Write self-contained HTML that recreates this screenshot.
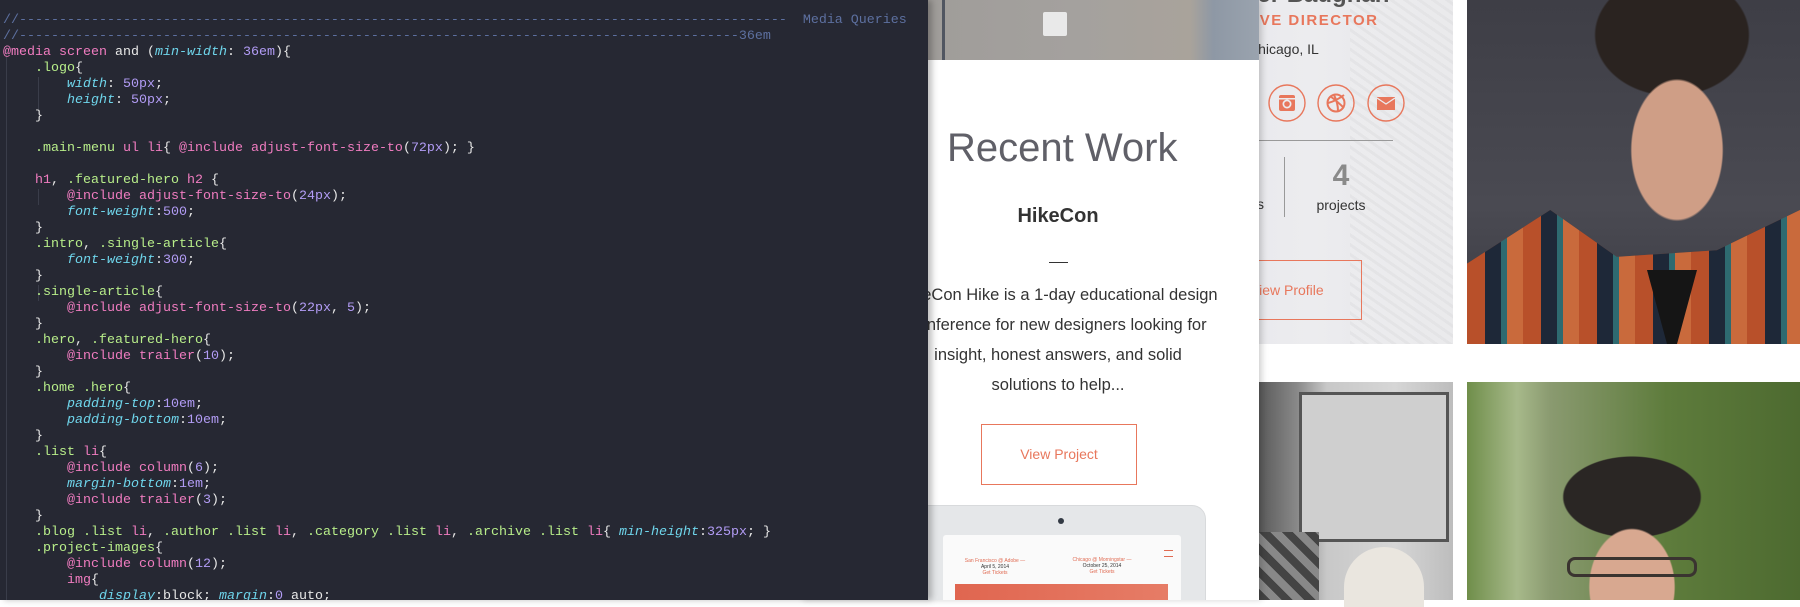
<!DOCTYPE html>
<html><head><meta charset="utf-8"><style>
*{margin:0;padding:0;box-sizing:border-box}
body{width:1800px;height:600px;overflow:hidden;background:#fff;position:relative;font-family:"Liberation Sans",sans-serif}
.abs{position:absolute}
#ed{left:0;top:0;width:928px;height:600px;background:#262833;z-index:5;overflow:hidden;box-shadow:4px 0 6px rgba(0,0,0,.25)}
#code{position:absolute;left:3px;top:13px;font-family:"Liberation Mono",monospace;font-size:13.33px;line-height:16px;color:#e8e8e8;white-space:pre}
.c{color:#5d70a0}.p{color:#f07cc0}.g{color:#b8ee8a}.k{color:#6fd6ec;font-style:italic}.n{color:#b29cf5}.w{color:#eee}
.guide{position:absolute;width:1px;background:#3a3d4a}
#card{left:800px;top:0;width:459px;height:600px;background:#fff;box-shadow:3px 0 6px rgba(0,0,0,.18);z-index:3;overflow:hidden}
#prof{left:1100px;top:0;width:353px;height:344px;background:linear-gradient(90deg,#e4e4e8 0%,#ececef 60%,#e6e6e8 100%);z-index:1;overflow:hidden}
</style></head><body>

<div id="prof" class="abs">
  <div class="abs" style="left:250px;top:0;width:103px;height:344px;background:repeating-linear-gradient(35deg,#e2e2e4 0 3px,#ececee 3px 8px);opacity:.7"></div>
  <div class="abs" style="left:120px;top:-19px;font-size:24px;font-weight:bold;color:#555;white-space:nowrap">Peter Baughan</div>
  <div class="abs" style="left:96px;top:12px;font-size:15px;font-weight:bold;color:#e8775c;letter-spacing:1.5px;white-space:nowrap">CREATIVE DIRECTOR</div>
  <div class="abs" style="left:148px;top:41px;font-size:14px;color:#333;white-space:nowrap">Chicago, IL</div>
  <svg class="abs" style="left:150px;top:84px" width="210" height="40" viewBox="0 0 210 40">
    <g fill="none" stroke="#e8775c" stroke-width="1.4">
      <ellipse cx="37" cy="19" rx="18" ry="18"/><ellipse cx="86" cy="19" rx="18" ry="18"/><ellipse cx="136" cy="19" rx="18" ry="18"/>
    </g>
    <rect x="29" y="11" width="16" height="16" rx="2" fill="#e8775c"/>
    <circle cx="37" cy="20" r="4.5" fill="#ececef"/><circle cx="37" cy="20" r="2.8" fill="#e8775c"/><rect x="29" y="14" width="16" height="1.5" fill="#ececef"/>
    <g fill="none" stroke="#e8775c" stroke-width="2"><circle cx="86" cy="19" r="8.5"/><path d="M80 12q8 6 14 12M78 19q8-2 16-8M84 11q4 8 4 16"/></g>
    <rect x="127" y="13" width="18" height="13" fill="#e8775c"/><path d="M127 14l9 6 9-6" fill="none" stroke="#ececef" stroke-width="1.3"/>
  </svg>
  <div class="abs" style="left:100px;top:140px;width:193px;height:1px;background:#999"></div>
  <div class="abs" style="left:184px;top:157px;width:1px;height:60px;background:#999"></div>
  <div class="abs" style="left:157px;top:196px;font-size:14px;color:#333">s</div>
  <div class="abs" style="left:206px;top:159px;width:70px;text-align:center;font-size:30px;font-weight:bold;color:#8a8a8a">4</div>
  <div class="abs" style="left:201px;top:197px;width:80px;text-align:center;font-size:14px;color:#333">projects</div>
  <div class="abs" style="left:130px;top:260px;width:132px;height:60px;border:1px solid #e8775c"></div>
  <div class="abs" style="left:150px;top:282px;font-size:14px;color:#e8775c;white-space:nowrap">View Profile</div>
</div>

<div id="card" class="abs">
  <div class="abs" style="left:0;top:0;width:459px;height:60px;background:linear-gradient(90deg,#9c9996 0%,#a4a19e 60%,#a9a39b 85%,#8e98a5 90%,#9aa3ae 100%)"></div>
  <div class="abs" style="left:142px;top:0;width:3px;height:60px;background:#505560"></div>
  <div class="abs" style="left:243px;top:12px;width:24px;height:24px;background:#e9e9e9;border-radius:2px"></div>
  <div class="abs" style="left:147px;top:126px;font-size:40px;color:#606068;font-weight:300;white-space:nowrap">Recent Work</div>
  <div class="abs" style="left:158px;top:205px;width:200px;text-align:center;font-size:20px;font-weight:bold;color:#333">HikeCon</div>
  <div class="abs" style="left:249px;top:262px;width:19px;height:1px;background:#333"></div>
  <div class="abs" style="left:58px;top:280px;width:400px;text-align:center;font-size:16.5px;line-height:30px;color:#333">
    HikeCon Hike is a 1-day educational design<br>conference for new designers looking for<br>insight, honest answers, and solid<br>solutions to help...</div>
  <div class="abs" style="left:181px;top:424px;width:156px;height:61px;border:1.3px solid #e8775c"></div>
  <div class="abs" style="left:181px;top:446px;width:156px;text-align:center;font-size:14px;color:#e8775c">View Project</div>
  <div class="abs" style="left:60px;top:505px;width:346px;height:120px;background:#e5e7e9;border-radius:14px;border:1px solid #d8dadc"></div>
  <div class="abs" style="left:258px;top:518px;width:6px;height:6px;border-radius:50%;background:#333a44"></div>
  <div class="abs" style="left:143px;top:535px;width:238px;height:80px;background:#fafafa;border-radius:3px"></div>
  <div class="abs" style="left:155px;top:558px;width:80px;text-align:center;font-size:5px;line-height:6px;color:#e06b52">San Francisco @ Adobe —<br><span style="color:#333">April 5, 2014</span><br>Get Tickets</div>
  <div class="abs" style="left:262px;top:557px;width:80px;text-align:center;font-size:5px;line-height:6px;color:#e06b52">Chicago @ Morningstar —<br><span style="color:#333">October 25, 2014</span><br>Get Tickets</div>
  <div class="abs" style="left:364px;top:550px;width:9px;height:7px;border-top:1.5px solid #e06b52;border-bottom:1.5px solid #e06b52"></div>
  <div class="abs" style="left:155px;top:584px;width:213px;height:20px;background:linear-gradient(90deg,#e06650,#e67c66)"></div>
</div>

<div class="abs" style="left:1259px;top:382px;width:194px;height:218px;background:linear-gradient(90deg,#5a5a5a 0%,#8a8a8a 20%,#c8c8c8 35%,#d6d6d6 70%,#bdbdbd 100%)">
  <div class="abs" style="left:40px;top:10px;width:150px;height:150px;border:3px solid #555;background:#cfcfcf"></div>
  <div class="abs" style="left:0;top:150px;width:60px;height:68px;background:repeating-linear-gradient(45deg,#444 0 8px,#888 8px 16px)"></div>
  <div class="abs" style="left:85px;top:165px;width:80px;height:60px;border-radius:40px 40px 0 0;background:#eae6df"></div>
</div>

<div class="abs" style="left:1467px;top:0;width:333px;height:344px;background:radial-gradient(ellipse 75px 115px at 210px 150px,#cf9e86 0 60%,transparent 62%),radial-gradient(ellipse 95px 75px at 205px 35px,#2a2320 0 80%,transparent 82%),linear-gradient(180deg,#3e3e46 0,#4a4a52 60%,#3a3a42 100%)">
  <div class="abs" style="left:0;top:210px;width:333px;height:134px;background:repeating-linear-gradient(90deg,#b8502a 0 18px,#1e2838 18px 34px,#2e6a70 34px 40px,#c96a3c 40px 56px),#8a3a20;clip-path:polygon(0 40%,25% 0,45% 35%,75% 30%,100% 0,100% 100%,0 100%)"></div>
  <div class="abs" style="left:180px;top:270px;width:50px;height:74px;background:#151515;clip-path:polygon(0 0,100% 0,60% 100%,40% 100%)"></div>
</div>

<div class="abs" style="left:1467px;top:382px;width:333px;height:218px;background:radial-gradient(ellipse 70px 95px at 165px 205px,#d8a890 0 60%,transparent 62%),radial-gradient(ellipse 85px 50px at 165px 115px,#2a2624 0 80%,transparent 82%),linear-gradient(90deg,#6f8e4a 0%,#a7b98a 15%,#8a9a70 25%,#5e7c3c 60%,#4d6a30 100%)">
  <div class="abs" style="left:100px;top:175px;width:130px;height:20px;border:3px solid #3a3430;border-radius:8px"></div>
</div>

<div id="ed" class="abs">
<div class="guide" style="left:6px;top:45px;height:560px"></div>
<div class="guide" style="left:38px;top:77px;height:32px"></div>
<div class="guide" style="left:38px;top:189px;height:16px"></div>
<div class="guide" style="left:38px;top:285px;height:16px"></div>
<div id="code"><span class="c">//------------------------------------------------------------------------------------------------  Media Queries</span>
<span class="c">//------------------------------------------------------------------------------------------36em</span>
<span class="p">@media screen</span> and (<span class="k">min-width</span>: <span class="n">36em</span>){
    <span class="g">.logo</span>{
        <span class="k">width</span>: <span class="n">50px</span>;
        <span class="k">height</span>: <span class="n">50px</span>;
    }

    <span class="g">.main-menu</span> <span class="p">ul li</span>{ <span class="p">@include adjust-font-size-to</span>(<span class="n">72px</span>); }

    <span class="p">h1</span>, <span class="g">.featured-hero</span> <span class="p">h2</span> {
        <span class="p">@include adjust-font-size-to</span>(<span class="n">24px</span>);
        <span class="k">font-weight</span>:<span class="n">500</span>;
    }
    <span class="g">.intro</span>, <span class="g">.single-article</span>{
        <span class="k">font-weight</span>:<span class="n">300</span>;
    }
    <span class="g">.single-article</span>{
        <span class="p">@include adjust-font-size-to</span>(<span class="n">22px</span>, <span class="n">5</span>);
    }
    <span class="g">.hero</span>, <span class="g">.featured-hero</span>{
        <span class="p">@include trailer</span>(<span class="n">10</span>);
    }
    <span class="g">.home</span> <span class="g">.hero</span>{
        <span class="k">padding-top</span>:<span class="n">10em</span>;
        <span class="k">padding-bottom</span>:<span class="n">10em</span>;
    }
    <span class="g">.list</span> <span class="p">li</span>{
        <span class="p">@include column</span>(<span class="n">6</span>);
        <span class="k">margin-bottom</span>:<span class="n">1em</span>;
        <span class="p">@include trailer</span>(<span class="n">3</span>);
    }
    <span class="g">.blog</span> <span class="g">.list</span> <span class="p">li</span>, <span class="g">.author</span> <span class="g">.list</span> <span class="p">li</span>, <span class="g">.category</span> <span class="g">.list</span> <span class="p">li</span>, <span class="g">.archive</span> <span class="g">.list</span> <span class="p">li</span>{ <span class="k">min-height</span>:<span class="n">325px</span>; }
    <span class="g">.project-images</span>{
        <span class="p">@include column</span>(<span class="n">12</span>);
        <span class="p">img</span>{
            <span class="k">display</span>:block; <span class="k">margin</span>:<span class="n">0</span> auto;
</div>
</div>
</body></html>
